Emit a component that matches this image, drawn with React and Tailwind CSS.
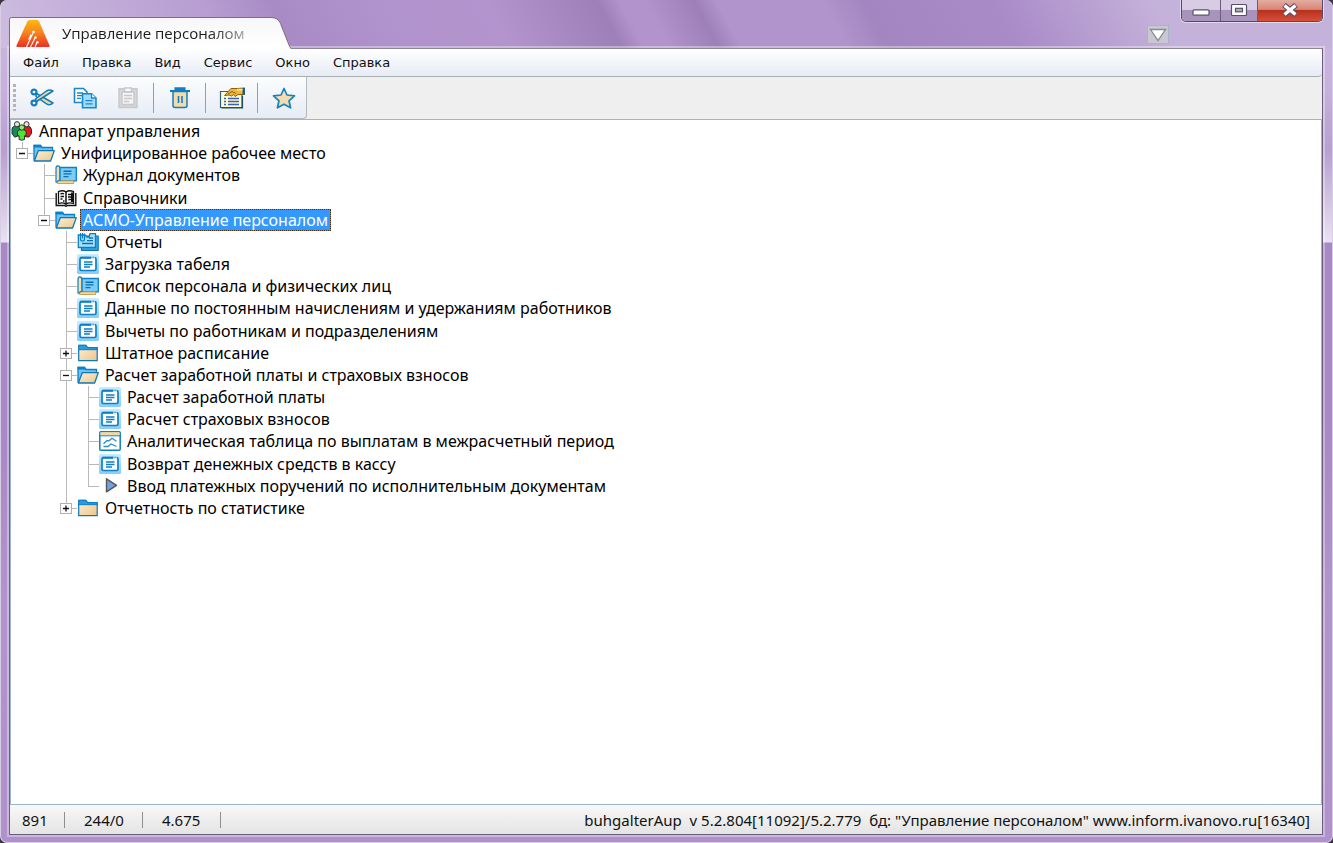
import React, { useState } from 'react';
import clsx from 'clsx';

const FolderOpenIcon = () => (
  <svg viewBox="0 0 22 18" className="w-[22px] h-[18px]">
    <defs>
      <linearGradient id="flap" x1="0" y1="0" x2="1" y2="1">
        <stop offset="0" stopColor="#fdf0d4" />
        <stop offset="1" stopColor="#eec588" />
      </linearGradient>
    </defs>
    <path d="M1 16.500V1.500h6.500l1.500 2h10.500V7" fill="#6ec3f7" stroke="#0d7fc4" strokeWidth="1.300" />
    <path d="M.6 3.400V.7h7.200l1.600 2.700z" fill="#0d7fc4" />
    <path d="M1.300 17 5.400 6.600h15.900L17.600 17z" fill="url(#flap)" stroke="#0d78b8" strokeWidth="1.300" strokeLinejoin="round" />
  </svg>
);

const FolderIcon = () => (
  <svg viewBox="0 0 22 18" className="w-[22px] h-[18px]">
    <defs>
      <linearGradient id="folder" x1="0" y1="0" x2="1" y2="1">
        <stop offset="0" stopColor="#fdf0d4" />
        <stop offset="1" stopColor="#eec588" />
      </linearGradient>
    </defs>
    <path d="M1.700 16.600V1.300h7.200l1.600 2.400h9.700v12.900z" fill="url(#folder)" stroke="#0d78b8" strokeWidth="1.200" />
    <path d="M1.700 1.300h7.200l1.600 2.400h9.700v2H1.700z" fill="#2a9be0" stroke="#0d7fc4" strokeWidth="1" />
  </svg>
);

const JournalIcon = () => (
  <svg viewBox="0 0 22 20" className="w-[22px] h-[20px]">
    <path d="M4.800 2.500h16.500v13.300H4.800z" fill="#7accfb" stroke="#0d7fc4" strokeWidth="1.300" />
    <path d="M5 15.800h13.700v2.700H3q-1.900-.1-1.900-1.900L3 14.800z" fill="#f4d59c" stroke="#c08b3c" strokeWidth=".8" />
    <path d="M1 17V3.200Q1 .8 2.900.8T4.800 3v12.500q-1.800-.3-2.400 1.500z" fill="#f8ddaa" stroke="#0d7fc4" strokeWidth="1.200" />
    <path d="M8.500 6.200h8M8.500 8.900h8M8.500 11.600h5" stroke="#0d6fb0" strokeWidth="1.400" />
  </svg>
);

const BookIcon = () => (
  <svg viewBox="0 0 22 18" className="w-[22px] h-[18px]" fill="none" stroke="#111">
    <path d="M3.500 2.500Q8 .8 11 3q3-2.200 7.500-.5v12q-4.500-1.500-7.500.7-3-2.200-7.500-.7z" fill="#fff" strokeWidth="1.300" />
    <path d="M11 3v12.500" strokeWidth="1.500" />
    <path d="M1.200 4v12.500h8.300l1.500.8 1.500-.8h8.300V4" strokeWidth="1.400" />
    <path d="M5.500 5q1.500-1 3.500 0M5.500 7.500h3.500M5.500 10h2M8 12h1.500M13 5.500h3.500M13 8h3M13.500 10.500h3" strokeWidth="1.300" />
    <path d="M17 3.500v9.500" strokeWidth="2" />
  </svg>
);

const ReportIcon = () => (
  <svg viewBox="0 0 22 20" className="w-[22px] h-[20px]">
    <path d="M4.500 4h16.700v14.300H4.500z" fill="#3ba6e8" stroke="#0d78b8" strokeWidth="1.200" />
    <path d="M1.300 3H8l2 2h2l1-3.300h5.500v13.800H1.300z" fill="#a4e0fe" stroke="#0d7fc4" strokeWidth="1.300" />
    <path d="M3.500 1v6q0 2 2 2t2-2V1.500M5.500 1v5.500" fill="none" stroke="#0d7fc4" strokeWidth="1.200" />
    <path d="M12 6h4M10 8.700h6M5 11.500h11" stroke="#0d6fb0" strokeWidth="1.300" />
  </svg>
);

const FormIcon = () => (
  <svg viewBox="0 0 22 20" className="w-[22px] h-[20px]">
    <defs>
      <linearGradient id="form" x1="0" y1="0" x2="0" y2="1">
        <stop offset="0" stopColor="#c9ecff" />
        <stop offset="1" stopColor="#83cdfb" />
      </linearGradient>
    </defs>
    <rect x="0" y="0" width="22" height="20" rx="1.500" fill="url(#form)" />
    <rect x="3" y="3.500" width="16" height="13" rx="1.500" fill="#fff" stroke="#0d7fc4" strokeWidth="1.700" />
    <path d="M3 3.800h11" stroke="#0d7fc4" strokeWidth="2" />
    <path d="M15 2.500v2.500M17.200 2.500v2.500" stroke="#d8f1ff" strokeWidth="1" />
    <path d="M7 8h8.500M7 10.500h8.500M7 13h6" stroke="#0d7fc4" strokeWidth="1.300" />
  </svg>
);

const AnalyticsIcon = () => (
  <svg viewBox="0 0 22 20" className="w-[22px] h-[20px]">
    <rect x=".8" y=".8" width="20.400" height="18.400" rx="1" fill="#fff" stroke="#0d7fc4" strokeWidth="1.500" />
    <path d="M1.500 1.200h19v3h-19z" fill="#efd9a4" />
    <path d="M1 4.800h20" stroke="#0d7fc4" strokeWidth="1" />
    <path d="m4.500 12.800 3.500-3.300 2 .3 3-2.600 4.500 3M4.500 15.500h4.500l3-2.600 5.500 2.600" fill="none" stroke="#2b8fc4" strokeWidth="1.300" />
  </svg>
);

const PlayIcon = () => (
  <svg viewBox="0 0 22 20" className="w-[22px] h-[20px]">
    <path d="m7.500 2.800 10 6.500-10 6.500z" fill="#6da3e6" stroke="#565656" strokeWidth="1.400" strokeLinejoin="round" />
  </svg>
);

const PeopleIcon = () => (
  <svg viewBox="0 0 22 20" className="w-[22px] h-[20px]" stroke="#222" strokeWidth=".9">
    <path d="M1 8.500q0-3.500 4.500-3.500T10 8.500V15H6l-1 1H3.500L1 12.500z" fill="#178a5c" />
    <path d="M12 8.500q0-3.500 4-3.500t4.500 3.500v4L18 16h-2L12 15z" fill="#e01b1b" />
    <circle cx="6" cy="3.200" r="2.600" fill="#dfe8df" />
    <circle cx="15.500" cy="3.200" r="2.600" fill="#e8dfdf" />
    <path d="M6.500 11.500q0-3 4.300-3t4.300 3v3.300H13.500V18.500q-2.700 1.500-5.400 0v-3.700H6.500z" fill="#4fe03c" />
    <circle cx="10.800" cy="6.500" r="2.700" fill="#8af06f" />
  </svg>
);

const AppLogo = () => (
  <svg viewBox="0 0 34 29" className="w-[34px] h-[29px]">
    <defs>
      <linearGradient id="logo" x1="0" y1="0" x2="0" y2="1">
        <stop offset="0" stopColor="#fcb813" />
        <stop offset=".45" stopColor="#f7861f" />
        <stop offset="1" stopColor="#ee2f24" />
      </linearGradient>
    </defs>
    <path d="M13.500 1h7.500q1.500 0 2.200 1.500L33.500 26.500q.5 1.500-1 1.500h-31Q0 28 .5 26.500L11.300 2.500Q12 1 13.500 1z" fill="url(#logo)" />
    <path d="M10.500 28 17 14M14.500 28l4.500-9M19 28l2-4.500M12.500 20.500l2-3.500" stroke="#fff" strokeWidth="1.100" fill="none" />
    <g fill="#fff">
      <circle cx="17.500" cy="13" r="1.300" />
      <circle cx="19.500" cy="18.500" r="1.200" />
      <circle cx="21.500" cy="23.200" r="1.200" />
      <circle cx="14.800" cy="16.500" r="1" />
    </g>
  </svg>
);

const ScissorsIcon = () => (
  <svg viewBox="0 0 24 22" className="w-6 h-[22px]" stroke="#157cb8" strokeLinejoin="round">
    <path d="M6.500 6.500 23 16q-3 3-6.500.8L6 9.500z" fill="#f0d7a6" strokeWidth="1.500" />
    <path d="M6.500 14.500 23 4q-3.500-1.800-6.500 0L5.500 12z" fill="#f0d7a6" strokeWidth="1.500" />
    <ellipse cx="4" cy="5" rx="2.500" ry="2.300" fill="#fff" strokeWidth="2.200" />
    <ellipse cx="4" cy="16" rx="2.500" ry="2.300" fill="#fff" strokeWidth="2.200" />
  </svg>
);

const CopyIcon = () => (
  <svg viewBox="0 0 24 22" className="w-6 h-[22px]" stroke="#1b87c9" strokeWidth="1.600">
    <path d="M1.500 1.500h9l3.500 3.500v10.500H1.500z" fill="#fff" />
    <path d="M4 6h6M4 8.700h5M4 11.400h4" fill="none" strokeWidth="1.300" />
    <path d="M9.500 6.800h9l4.500 4.200v9.700H9.500z" fill="#a0dcfd" />
    <path d="M18.500 6.800v4.200H23" fill="#fff" strokeWidth="1.300" />
    <path d="M12.500 13.700h7M12.500 16.800h7" fill="none" strokeWidth="1.300" />
  </svg>
);

const PasteIcon = () => (
  <svg viewBox="0 0 24 22" className="w-6 h-[22px]" stroke="#c6c8ca" strokeWidth="1.400">
    <path d="M3 1.800h18v18.700H3z" fill="#d5d7d9" />
    <path d="M6 5h12v12.500H6z" fill="#f4f5f6" />
    <path d="M8.500 1h7v3.800h-7z" fill="#f8f8f8" />
    <path d="M8 8.500h8M8 11.500h8M8 14.500h5" fill="none" />
  </svg>
);

const TrashIcon = () => (
  <svg viewBox="0 0 24 22" className="w-6 h-[22px]" stroke="#0f7fc4">
    <path d="M5 4.500h14v14q0 2-2 2H7q-2 0-2-2z" fill="#f6dba9" strokeWidth="1.500" />
    <path d="M2 4h20M7.500 3V1.300h9V3" fill="#0f7fc4" strokeWidth="2" />
    <path d="M10.500 9v7M14 9v7" fill="none" strokeWidth="1.600" />
  </svg>
);

const PropertiesIcon = () => (
  <svg viewBox="0 0 26 22" className="w-[26px] h-[22px]">
    <path d="M1.500 4.500h21.500v16H1.500z" fill="#fdfbd0" stroke="#2b5f7c" strokeWidth="1.200" />
    <path d="M2.500 20.800h21V9" fill="none" stroke="#1e4d6b" strokeWidth="1.200" />
    <path d="M5 11.500h2M9 11.500h11M5 14.500h2M9 14.500h11M5 17.500h2M9 17.500h11" stroke="#3d5fb5" strokeWidth="1.400" />
    <path d="M5.500 8.500 12 1.500H18l8-.5v6.500H19l-3 2-1.500-2-2 1.500L10 8z" fill="#f0b93c" stroke="#8b5e13" strokeWidth="1" />
    <path d="M23.500 1H26v6.500h-2.500z" fill="#17618c" />
    <path d="M18 1.800h5.500v2H18z" fill="#fbe08a" />
    <path d="m9 7 4-2.500 4 2" stroke="#8b5e13" fill="none" />
  </svg>
);

const StarIcon = () => (
  <svg viewBox="0 0 24 22" className="w-6 h-[22px]">
    <path d="m12 1.500 3 6.500 7.500.8-5.500 5 1.600 7L12 17.300 5.400 20.800 7 13.800 1.500 8.800 9 8z" fill="#f4dcae" stroke="#1783bd" strokeWidth="1.700" strokeLinejoin="round" />
  </svg>
);

const ICONS = {
  people: PeopleIcon,
  folderOpen: FolderOpenIcon,
  folder: FolderIcon,
  journal: JournalIcon,
  book: BookIcon,
  report: ReportIcon,
  form: FormIcon,
  analytics: AnalyticsIcon,
  play: PlayIcon,
};

// guides: one entry per indent column, "" = empty, "line" = passes through,
// "tee" = branch to the item, "end" = last branch
const TREE = [
  { label: 'Аппарат управления', icon: 'people', guides: [] },
  { label: 'Унифицированное рабочее место', icon: 'folderOpen', guides: ['end'], box: 'minus' },
  { label: 'Журнал документов', icon: 'journal', guides: ['', 'tee'] },
  { label: 'Справочники', icon: 'book', guides: ['', 'tee'] },
  { label: 'АСМО-Управление персоналом', icon: 'folderOpen', guides: ['', 'end'], box: 'minus' },
  { label: 'Отчеты', icon: 'report', guides: ['', '', 'tee'] },
  { label: 'Загрузка табеля', icon: 'form', guides: ['', '', 'tee'] },
  { label: 'Список персонала и физических лиц', icon: 'journal', guides: ['', '', 'tee'] },
  { label: 'Данные по постоянным начислениям и удержаниям работников', icon: 'form', guides: ['', '', 'tee'] },
  { label: 'Вычеты по работникам и подразделениям', icon: 'form', guides: ['', '', 'tee'] },
  { label: 'Штатное расписание', icon: 'folder', guides: ['', '', 'tee'], box: 'plus' },
  { label: 'Расчет заработной платы и страховых взносов', icon: 'folderOpen', guides: ['', '', 'tee'], box: 'minus' },
  { label: 'Расчет заработной платы', icon: 'form', guides: ['', '', 'line', 'tee'] },
  { label: 'Расчет страховых взносов', icon: 'form', guides: ['', '', 'line', 'tee'] },
  { label: 'Аналитическая таблица по выплатам в межрасчетный период', icon: 'analytics', guides: ['', '', 'line', 'tee'] },
  { label: 'Возврат денежных средств в кассу', icon: 'form', guides: ['', '', 'line', 'tee'] },
  { label: 'Ввод платежных поручений по исполнительным документам', icon: 'play', guides: ['', '', 'line', 'end'] },
  { label: 'Отчетность по статистике', icon: 'folder', guides: ['', '', 'end'], box: 'plus' },
];

const MENU = ['Файл', 'Правка', 'Вид', 'Сервис', 'Окно', 'Справка'];

const Guide = ({ type, box }) => (
  <span className="relative w-[22px] shrink-0 self-stretch">
    {type && (
      <span className={clsx('absolute left-[11px] top-0 w-px bg-[#b9b9b9]', type === 'end' ? 'h-1/2' : 'h-full')} />
    )}
    {(type === 'tee' || type === 'end') && (
      <span className="absolute left-[11px] right-0 top-1/2 h-px bg-[#b9b9b9]" />
    )}
    {box && (
      <svg viewBox="0 0 12 12" className="absolute left-[5px] top-[6px] w-3 h-3" fill="none">
        <rect x=".5" y=".5" width="11" height="10" fill="#fff" stroke="#b0b0b0" />
        <path d={box === 'plus' ? 'M3 5.500h6M6 2.500v6' : 'M3 5.500h6'} stroke="#111" strokeWidth="1.300" />
      </svg>
    )}
  </span>
);

const TreeRow = ({ item, selected, onSelect }) => {
  const Icon = ICONS[item.icon];
  return (
    <li className="flex items-center min-h-0">
      {item.guides.map((type, i) => (
        <Guide key={i} type={type} box={i === item.guides.length - 1 ? item.box : undefined} />
      ))}
      <span className="flex w-[22px] shrink-0 justify-center">
        <Icon />
      </span>
      <button
        type="button"
        onClick={onSelect}
        className={clsx(
          'ml-[3px] h-[22px] px-[2px] text-[16px] leading-[20px] whitespace-nowrap border',
          selected ? 'bg-[#3399ff] text-white border-dotted border-[#4a2c10]' : 'border-transparent text-black'
        )}
      >
        {item.label}
      </button>
    </li>
  );
};

const ToolButton = ({ label, disabled, children }) => (
  <button type="button" aria-label={label} disabled={disabled} className="flex w-[43px] items-center justify-center">
    {children}
  </button>
);

const Separator = () => <span className="mx-[4px] h-[30px] w-px bg-[#9c9c9c]" />;

const WindowButtons = () => (
  <div className="flex h-[22px] w-[142px] overflow-hidden rounded-b-[5px] border border-t-0 border-[#554866] shadow-[0_0_0_1px_rgba(255,255,255,0.5)]">
    <button type="button" aria-label="Свернуть" className="flex w-[39px] items-end justify-center border-r border-[#6b5b80] bg-linear-to-b from-[#d8cbe4] from-45% to-[#a893bd] to-50% pb-[5px]">
      <svg viewBox="0 0 18 7" className="h-[7px] w-[18px]">
        <rect x="1" y=".8" width="16" height="5.400" rx="1" fill="#fff" stroke="#57506a" strokeWidth="1.200" />
      </svg>
    </button>
    <button type="button" aria-label="Развернуть" className="flex w-[37px] items-center justify-center border-r border-[#6b5b80] bg-linear-to-b from-[#d8cbe4] from-45% to-[#a893bd] to-50% pb-[2px]">
      <svg viewBox="0 0 18 14" className="h-[14px] w-[18px]">
        <rect x="1.500" y="1.500" width="15" height="11" rx="1" fill="#fff" stroke="#57506a" strokeWidth="1.200" />
        <rect x="5.500" y="5.300" width="7" height="3.500" fill="#b7a6c8" stroke="#57506a" strokeWidth="1.200" />
      </svg>
    </button>
    <button type="button" aria-label="Закрыть" className="flex flex-1 items-center justify-center bg-[linear-gradient(180deg,#e3aea2_0%,#d98474_45%,#b8301c_50%,#d4503a_100%)] pb-[2px]">
      <svg viewBox="0 0 18 14" className="h-[14px] w-[18px]" fill="none">
        <path d="m3 2 12 10M15 2 3 12" stroke="#57506a" strokeWidth="5.500" />
        <path d="m3.500 2.500 11 9M14.500 2.500l-11 9" stroke="#fff" strokeWidth="3.400" />
      </svg>
    </button>
  </div>
);

const TitleBar = () => (
  <header className="relative -mb-px flex h-[49px] items-end">
    <div className="relative flex h-[32px] w-[282px] items-center">
      <svg viewBox="0 0 282 32" className="absolute inset-0 h-full w-full">
        <defs>
          <linearGradient id="tab" x1="0" y1="0" x2="0" y2="1">
            <stop offset="0" stopColor="#f7f7f9" />
            <stop offset="1" stopColor="#ffffff" />
          </linearGradient>
        </defs>
        <path d="M.5 32V2.500q0-2 2-2H262q7 0 9.500 6l7.500 19q2.500 6 3 6.500z" fill="url(#tab)" />
        <path d="M.5 32V2.500q0-2 2-2H262q7 0 9.500 6l7.500 19q2 5.500 3 6" fill="none" stroke="#77707f" />
      </svg>
      <span className="relative ml-[7px]">
        <AppLogo />
      </span>
      <h1 className="relative ml-[12px] bg-linear-to-r from-[#1c1c1c] from-80% to-[#a5a5a5] bg-clip-text font-['Open_Sans',sans-serif] text-[15px] text-transparent">
        Управление персоналом
      </h1>
    </div>
    <div className="flex flex-1 items-end justify-end self-stretch">
      <button type="button" aria-label="Список вкладок" className="mb-[5px] mr-[12px] flex h-[19px] w-[22px] items-center justify-center border border-[#a9b6c2] bg-[#c6c9d2]">
        <svg viewBox="0 0 18 14" className="h-[14px] w-[18px]">
          <path d="M1.500 1.500h15L9 12.500z" fill="#fff" stroke="#8a8a8a" strokeWidth="1.300" />
        </svg>
      </button>
      <div className="self-start">
        <WindowButtons />
      </div>
    </div>
  </header>
);

const StatusCell = ({ children, className }) => (
  <span className={clsx('flex h-4 items-center border-r border-[#8f8f8f]', className)}>{children}</span>
);

const App = () => {
  const [selected, setSelected] = useState(4);

  return (
    <div className="h-screen bg-[#3a3340]">
      <div className="flex h-full flex-col overflow-hidden rounded-[7px] bg-[linear-gradient(180deg,#cbb8df_0px,#c6b0dc_90px,#b79fd0_150px,#e9e2f1_242px,#a888c5_243px,#a888c5_420px,#b294cc_600px,#b091cb_100%)] font-['DejaVu_Sans',sans-serif] text-[13px] text-[#111]">
        <div className="flex min-h-0 flex-1 flex-col rounded-[7px] border border-t-0 border-[#d9cde6] bg-[linear-gradient(62deg,#cfbde0_0px,#b79dd2_200px,#a88bc5_260px,#b092cc_350px,#b394cd_450px,#9e80b9_548px,#b293cc_568px,#b293cc_590px,#9e80b9_634px,#b294cc_654px,#b294cc_748px,#a385c0_782px,#a98bc8_900px,#c5b2da_1040px,#c5b2da_1130px)] bg-[length:100%_48px] bg-no-repeat pb-[7px] pl-[8px] pr-[9px]">
          <TitleBar />
          <div className="flex min-h-0 flex-1 flex-col border border-[#6b5d7c] border-t-[#8f8599] bg-[#efefef] shadow-[0_0_0_2px_rgba(255,255,255,0.35)]">
            <nav className="flex h-[28px] shrink-0 items-center gap-[23px] rounded-br border-b border-[#a9b0b2] bg-linear-to-b from-white to-[#e6ebf5] pl-[13px]">
              {MENU.map((name) => (
                <button key={name} type="button">
                  {name}
                </button>
              ))}
            </nav>

            {/* Toolbar */}
            <div className="flex h-[42px] shrink-0">
              <div className="flex items-center rounded-br border-r border-b border-[#b5b8bd] bg-linear-to-b from-[#fcfdfe] to-[#e6ebf5] pl-[3px] pr-px">
                <span className="h-[27px] w-[3px] bg-[repeating-linear-gradient(180deg,#b5b5b5_0px,#b5b5b5_3px,transparent_3px,transparent_5px)]" />
                <span className="w-[4px]" />
                <ToolButton label="Вырезать"><ScissorsIcon /></ToolButton>
                <ToolButton label="Копировать"><CopyIcon /></ToolButton>
                <ToolButton label="Вставить" disabled><PasteIcon /></ToolButton>
                <Separator />
                <ToolButton label="Удалить"><TrashIcon /></ToolButton>
                <Separator />
                <ToolButton label="Свойства"><PropertiesIcon /></ToolButton>
                <Separator />
                <ToolButton label="Избранное"><StarIcon /></ToolButton>
              </div>
            </div>

            <main className="min-h-0 flex-1 overflow-hidden border border-[#9db6cc] bg-white font-['Noto_Sans',sans-serif]">
              <ul className="grid h-[399px] auto-rows-fr">
                {TREE.map((item, i) => (
                  <TreeRow key={item.label} item={item} selected={i === selected} onSelect={() => setSelected(i)} />
                ))}
              </ul>
            </main>

            <footer className="flex h-[29px] shrink-0 items-center justify-between bg-linear-to-b from-[#f8f8f8] to-[#e4e4e4] px-[12px] font-['Noto_Sans',sans-serif] text-[15px] leading-5">
              <div className="flex">
                <StatusCell className="w-[43px]">891</StatusCell>
                <StatusCell className="w-[78px] pl-[19px]">244/0</StatusCell>
                <StatusCell className="w-[78px] pl-[19px]">4.675</StatusCell>
              </div>
              <p className="whitespace-pre">
                {'buhgalterAup  v 5.2.804[11092]/5.2.779  бд: "Управление персоналом" www.inform.ivanovo.ru[16340]'}
              </p>
            </footer>
          </div>
        </div>
      </div>
    </div>
  );
};

export default App;
